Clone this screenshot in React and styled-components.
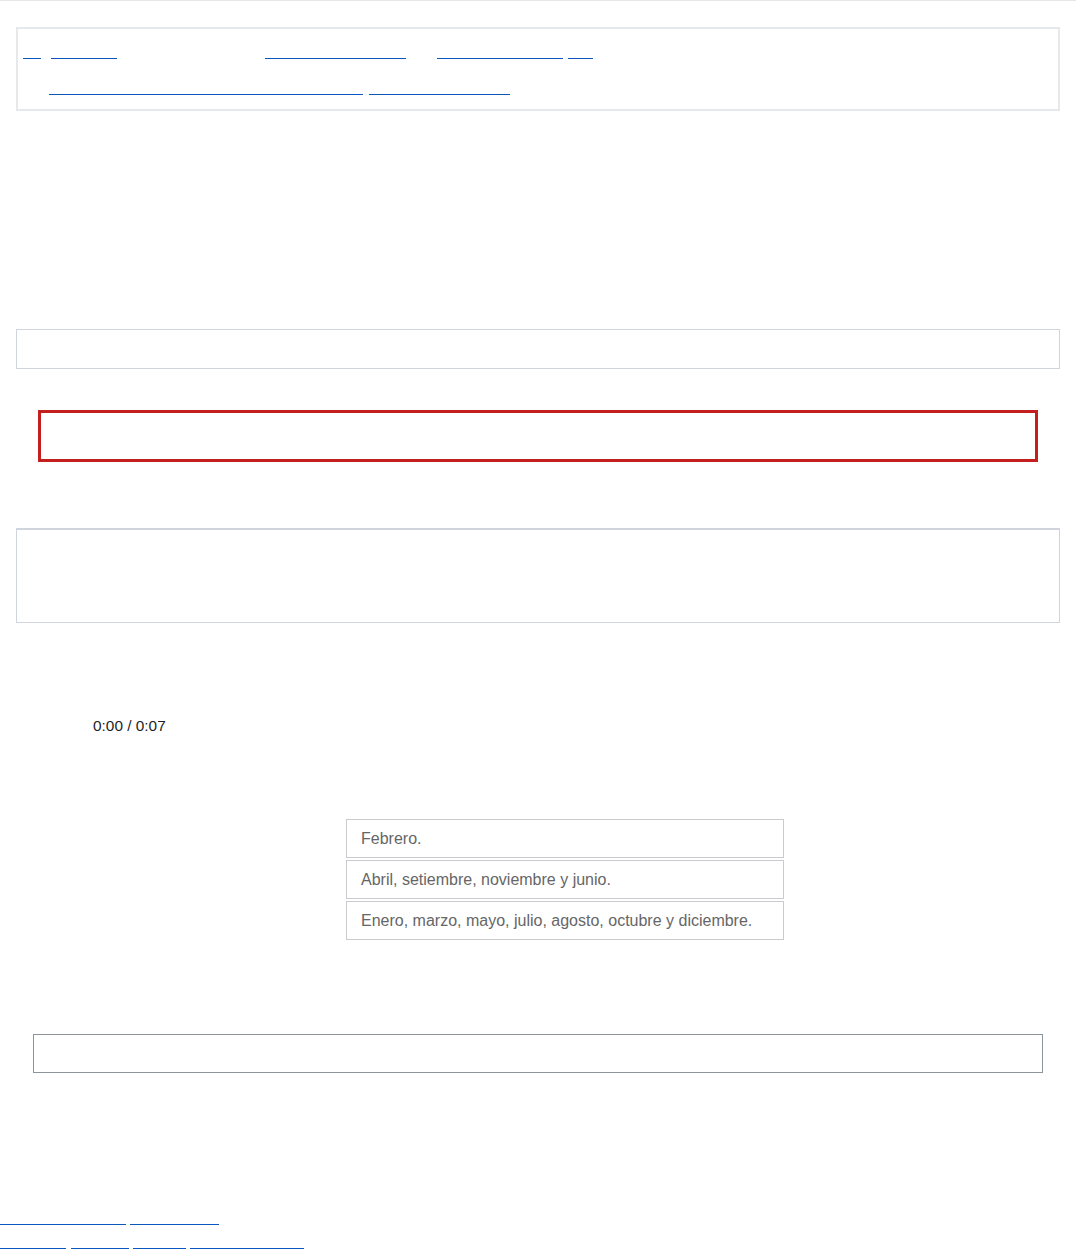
import React from "react";
import styled, { createGlobalStyle } from "styled-components";

const Global = createGlobalStyle`
  html, body { margin: 0; padding: 0; background: #ffffff; }
  body { font-family: "Liberation Sans", Arial, sans-serif; }
  * { box-sizing: border-box; }
`;

const Page = styled.div`
  width: 100%;
  min-height: 1249px;
  background: #ffffff;
`;

const TopRule = styled.div`
  height: 1px;
  background: #e9e5e7;
`;

const Main = styled.main`
  padding: 0 16px;
  display: flex;
  flex-direction: column;
`;

const NavBox = styled.nav`
  margin-top: 26px;
  height: 84px;
  border: 2px solid #e6e9ec;
  padding: 10px 0 14px;
  display: flex;
  flex-direction: column;
  gap: 16px;
`;

const LinkRow = styled.div`
  display: flex;
  align-items: flex-end;
  height: 20px;
`;

const Link = styled.a`
  display: inline-block;
  flex: none;
  width: ${(p) => p.$w}px;
  margin-left: ${(p) => p.$ml || 0}px;
  height: 20px;
  line-height: 18px;
  font-size: 12px;
  color: #ffffff;
  text-decoration: none;
  border-bottom: 1px solid #0b57c0;
  white-space: nowrap;
  overflow: hidden;
  cursor: pointer;
`;

const PlainBox = styled.div`
  margin-top: 218px;
  height: 40px;
  border: 1px solid #d0d4dc;
`;

const AlertBox = styled.div`
  margin: 41px 22px 0;
  height: 52px;
  border: 3px solid #c41f1f;
`;

const PanelBox = styled.section`
  margin-top: 66px;
  height: 95px;
  border: 1px solid #d0d4dc;
  border-top-width: 2px;
`;

const Player = styled.div`
  margin-top: 76px;
  height: 54px;
  display: flex;
  align-items: center;
  padding-left: 77px;
`;

const TimeText = styled.span`
  font-family: "Liberation Sans", Arial, sans-serif;
  font-size: 15.4px;
  color: #1f1f1f;
`;

const OptionList = styled.ul`
  list-style: none;
  margin: 66px 0 0 330px;
  padding: 0;
  width: 438px;
  display: flex;
  flex-direction: column;
  gap: 2px;
`;

const Option = styled.li`
  height: 39px;
  border: 1px solid #c9cbcf;
  padding-left: 14px;
  display: flex;
  align-items: center;
  font-size: 16px;
  color: #666666;
`;

const AnswerBox = styled.div`
  margin: 94px 17px 0;
  height: 39px;
  border: 1px solid #8e949c;
`;

const Footer = styled.footer`
  margin-top: 132px;
  display: flex;
  flex-direction: column;
  gap: 4px;
`;

const navRow1 = [
  { t: "Ir", w: 18, ml: 5 },
  { t: "Primaria", w: 66, ml: 10 },
  { t: "Matemática 2° grado", w: 141, ml: 148 },
  { t: "Medidas de tiempo", w: 126, ml: 31 },
  { t: "Uso", w: 25, ml: 5 },
];

const navRow2 = [
  { t: "Los meses del año y la cantidad de días", w: 314, ml: 31 },
  { t: "Actividad de repaso", w: 141, ml: 6 },
];

const footRow1 = [
  { t: "Términos de uso", w: 126, ml: 0 },
  { t: "Privacidad", w: 89, ml: 4 },
];

const footRow2 = [
  { t: "Ayuda", w: 66, ml: 0 },
  { t: "Contacto", w: 58, ml: 5 },
  { t: "Acerca", w: 53, ml: 4 },
  { t: "Mapa del sitio", w: 114, ml: 4 },
];

const options = [
  "Febrero.",
  "Abril, setiembre, noviembre y junio.",
  "Enero, marzo, mayo, julio, agosto, octubre y diciembre.",
];

const renderRow = (items) =>
  items.map((it) => (
    <Link key={it.t} href="#" $w={it.w} $ml={it.ml}>
      {it.t}
    </Link>
  ));

export default function App() {
  return (
    <Page>
      <Global />
      <TopRule />
      <Main>
        <NavBox>
          <LinkRow>{renderRow(navRow1)}</LinkRow>
          <LinkRow>{renderRow(navRow2)}</LinkRow>
        </NavBox>
        <PlainBox />
        <AlertBox />
        <PanelBox />
        <Player>
          <TimeText>0:00 / 0:07</TimeText>
        </Player>
        <OptionList>
          {options.map((o) => (
            <Option key={o}>{o}</Option>
          ))}
        </OptionList>
        <AnswerBox />
      </Main>
      <Footer>
        <LinkRow>{renderRow(footRow1)}</LinkRow>
        <LinkRow>{renderRow(footRow2)}</LinkRow>
      </Footer>
    </Page>
  );
}
